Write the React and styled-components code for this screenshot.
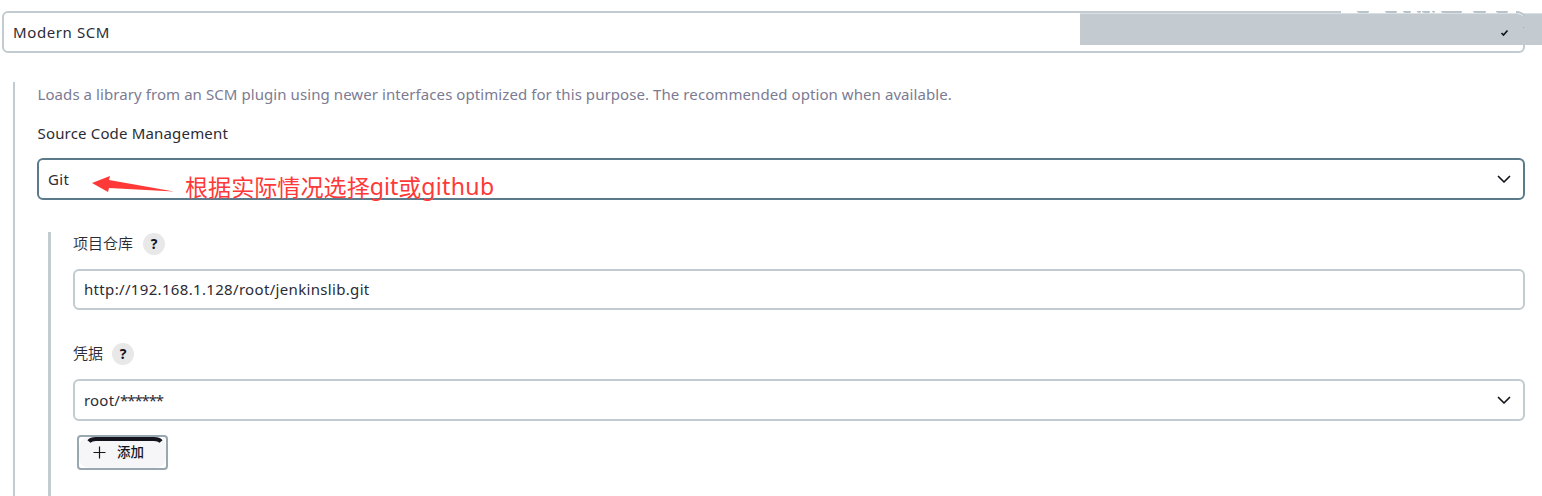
import styled, { createGlobalStyle } from 'styled-components';

const GlobalStyle = createGlobalStyle`
	* {
		box-sizing: border-box;
	}
	body {
		margin: 0;
		background: #fff;
		color: #14141f;
		font-family: 'Noto Sans', 'Noto Sans CJK SC', sans-serif;
		overflow: hidden;
	}
`;

const Layout = styled.div`
	position: relative;
	display: flex;
	flex-direction: column;
	height: 496px;
	padding: 11px 17px 0 2px;
	overflow: hidden;
`;

const Field = styled.div`
	position: relative;
	display: flex;
	align-items: center;
	justify-content: space-between;
	flex-shrink: 0;
	height: ${(props) => props.$height || 42}px;
	padding: 0 12px 0 9px;
	border: 2px solid ${(props) => (props.$focused ? '#5b7a8a' : '#c1cbd0')};
	border-radius: 6px;
	background: #fff;
`;

const Text = styled.span`
	color: #2b2b35;
	font-size: 15px;
	line-height: 20px;
	letter-spacing: ${(props) => props.$spacing || 0}px;
	white-space: nowrap;
`;

const UrlText = styled(Text)`
	padding-bottom: 1px;
`;

const Section = styled.div`
	display: flex;
	flex: 1;
	flex-direction: column;
	margin: 29px 0 0 11px;
	padding-left: 22px;
	border-left: 2px solid #c1cbd0;
`;

const Description = styled(Text)`
	margin: 2px 0 0 0.5px;
	color: #7b7b93;
`;

const Label = styled(Text)`
	margin: 19px 0 15px 0.5px;
`;

const SubSection = styled.div`
	display: flex;
	flex: 1;
	flex-direction: column;
	margin: 32px 0 0 11px;
	padding-left: 22px;
	border-left: 3px solid #c1cbd0;
`;

const FieldHeader = styled.div`
	display: flex;
	align-items: flex-end;
	gap: ${(props) => props.$gap || 10}px;
	height: 23px;
	margin: ${(props) => props.$top || 0}px 0 ${(props) => props.$bottom}px;

	${Text} {
		font-weight: 350;
		line-height: 24px;
	}
`;

const Help = styled.span`
	display: flex;
	align-items: center;
	justify-content: center;
	width: 22px;
	height: 22px;
	padding-bottom: 1px;
	border-radius: 50%;
	background: #e8e8e9;
	font-size: 14px;
	font-weight: 700;
`;

const AddButton = styled.button`
	position: relative;
	display: flex;
	width: 91px;
	height: 35px;
	margin: 14px 0 0 4px;
	padding: 0;
	border: 2px solid #98a7b0;
	border-radius: 4px;
	background: #fff;
	color: #14141f;
	font-family: inherit;
`;

const AddInner = styled.span`
	display: flex;
	flex: 1;
	align-items: center;
	gap: 11px;
	padding-left: 14px;
	border-radius: 10px;
	background: #f6f6f9;
	font-size: 13.5px;
	font-weight: 500;
	line-height: 20px;
`;

const AddLabel = styled.span`
	padding-bottom: 3px;
`;

const AddArc = styled.svg`
	position: absolute;
	top: 0;
	left: 8px;
`;

const Note = styled.div`
	position: absolute;
	top: 10px;
	left: 53px;
	display: flex;
	align-items: center;
	color: #ff3838;
	font-family: 'Noto Sans', 'Noto Sans CJK SC', sans-serif;
	font-size: 23.1px;
	line-height: 32px;
	white-space: nowrap;
`;

const NoteArrow = styled.svg`
	margin: 0 11px 4px 0;
`;

const Cjk = styled.span`
	font-family: 'Noto Sans CJK SC', sans-serif;
`;

const Latin = styled.span`
	letter-spacing: ${(props) => props.$spacing || 0}px;
`;

const Stars = styled.span`
	letter-spacing: -1.1px;
`;

const Mask = styled.div`
	position: absolute;
	top: 13px;
	right: 0;
	width: 462px;
	height: 32px;
	border-top: 1px solid #d9dfe2;
	background: #c3cbd1;
`;

const MaskEdge = styled.svg`
	position: absolute;
	top: 8px;
	right: 0;
`;

const Chevron = () => (
	<svg width="14" height="9" viewBox="0 0 14 9" fill="none">
		<path
			d="M1.5 1.5L7 7L12.5 1.5"
			stroke="#14141f"
			strokeWidth="1.7"
			strokeLinecap="round"
			strokeLinejoin="round"
		/>
	</svg>
);

// 가려진 테두리에 남은 조각들 [시작, 너비]
const fragments = [
	[27, 12],
	[55, 12],
	[73, 8],
	[87, 4],
	[92, 8],
	[102, 3],
	[111, 21],
	[143, 13],
	[166, 12]
];

const App = () => {
	return (
		<>
			<GlobalStyle />
			<Layout>
				<Field>
					<Text $spacing={0.6}>Modern SCM</Text>
				</Field>
				<Mask />
				<MaskEdge width="212" height="44" viewBox="0 0 212 44">
					<rect x="11" y="2" width="186" height="3" fill="#fff" />
					{fragments.map(([x, width]) => (
						<path
							key={x}
							d={`M${x} 3H${x + width}V4L${x + width - 1} 5H${x + 2}L${x} 4Z`}
							fill="#b9c4ca"
						/>
					))}
					<rect x="11" y="5" width="201" height="1" fill="#d9dfe2" />
					<path
						d="M186 4Q192 4 194 8"
						fill="none"
						stroke="#b9c4ca"
						strokeWidth="2"
					/>
					<path
						d="M188 5.5Q192 6 193 8"
						fill="none"
						stroke="#e8edef"
						strokeWidth="1"
					/>
					<path d="M193 19.5h1" stroke="#9ba9b1" />
					<path
						d="M171.5 25L173.5 27L177.5 22.5"
						fill="none"
						stroke="#14141f"
						strokeWidth="1.7"
					/>
				</MaskEdge>
				<Section>
					<Description $spacing={0.075}>
						Loads a library from an SCM plugin using newer interfaces optimized
						for this purpose. The recommended option when available.
					</Description>
					<Label $spacing={0.17}>Source Code Management</Label>
					<Field $focused>
						<Text $spacing={0.4}>Git</Text>
						<Note>
							<NoteArrow width="82" height="18" viewBox="0 0 82 18">
								<path
									d="M0 8L18 1L17 5L82 16.5L17 13L16 17Z"
									fill="#ff3838"
								/>
							</NoteArrow>
							<Cjk>根据实际情况选择</Cjk>
							<Latin>git</Latin>
							<Cjk>或</Cjk>
							<Latin $spacing={0.3}>github</Latin>
						</Note>
						<Chevron />
					</Field>
					<SubSection>
						<FieldHeader $bottom={14}>
							<Text>
								<Cjk>项目仓库</Cjk>
							</Text>
							<Help>?</Help>
						</FieldHeader>
						<Field $height={41}>
							<UrlText $spacing={0.33}>
								http://192.168.1.128/root/jenkinslib.git
							</UrlText>
						</Field>
						<FieldHeader $top={32} $bottom={14} $gap={9}>
							<Text>
								<Cjk>凭据</Cjk>
							</Text>
							<Help>?</Help>
						</FieldHeader>
						<Field>
							<Text $spacing={0.2}>
								root/<Stars>******</Stars>
							</Text>
							<Chevron />
						</Field>
						<AddButton>
							<AddInner>
								<svg width="13" height="13" viewBox="0 0 13 13">
									<path
										d="M6.5 .5V12.5M.5 6.5H12.5"
										stroke="#14141f"
										strokeWidth="1.2"
									/>
								</svg>
								<AddLabel>
									<Cjk>添加</Cjk>
								</AddLabel>
							</AddInner>
							<AddArc width="76" height="7" viewBox="0 0 76 7">
								<path
									d="M2 4.5Q4 2 9 2H67Q72 2 74 4.5"
									fill="none"
									stroke="#14141f"
									strokeWidth="4"
								/>
							</AddArc>
						</AddButton>
					</SubSection>
				</Section>
			</Layout>
		</>
	);
};

export default App;
